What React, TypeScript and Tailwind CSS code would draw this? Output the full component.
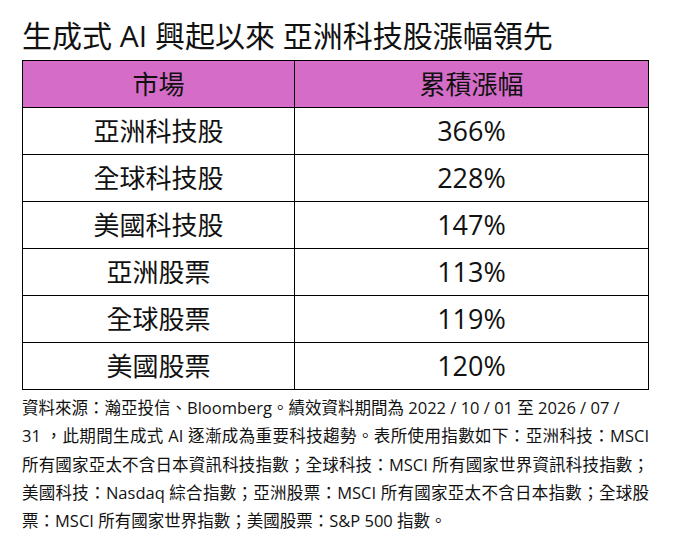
import React from 'react';

const FONT = '"Open Sans", "Noto Sans CJK TC", sans-serif';

const rows = [
  { market: '亞洲科技股', gain: '366%' },
  { market: '全球科技股', gain: '228%' },
  { market: '美國科技股', gain: '147%' },
  { market: '亞洲股票', gain: '113%' },
  { market: '全球股票', gain: '119%' },
  { market: '美國股票', gain: '120%' },
];

// footnote lines are fixed so that the wrapping matches the source
const noteLines = [
  '資料來源：瀚亞投信、Bloomberg。績效資料期間為 2022 / 10 / 01 至 2026 / 07 /',
  '31 ，此期間生成式 AI 逐漸成為重要科技趨勢。表所使用指數如下：亞洲科技：MSCI',
  '所有國家亞太不含日本資訊科技指數；全球科技：MSCI 所有國家世界資訊科技指數；',
  '美國科技：Nasdaq 綜合指數；亞洲股票：MSCI 所有國家亞太不含日本指數；全球股',
  '票：MSCI 所有國家世界指數；美國股票：S&P 500 指數。',
];

export default function App() {
  return (
    <div className="w-[676px] h-[540px] bg-white text-[#111] overflow-hidden" style={{ fontFamily: FONT }}>
      <div className="pl-[22px] pr-[27px] pt-[17px]">
        <h1 className="text-[30px] leading-[38px] font-normal whitespace-nowrap">
          生成式 AI 興起以來 亞洲科技股漲幅領先
        </h1>

        <table className="mt-[5px] w-[627px] border-collapse border-[1.5px] border-black text-[26px] text-[#111]">
          <colgroup>
            <col className="w-[272px]" />
            <col />
          </colgroup>
          <thead>
            <tr className="bg-[#d56dc8] h-[47px]">
              <th className="border-[1.5px] border-black font-normal text-center p-0">市場</th>
              <th className="border-[1.5px] border-black font-normal text-center p-0">累積漲幅</th>
            </tr>
          </thead>
          <tbody>
            {rows.map((r) => (
              <tr key={r.market} className="h-[47px]">
                <td className="border-[1.5px] border-black text-center p-0">{r.market}</td>
                <td className="border-[1.5px] border-black text-center p-0 text-[27px]">{r.gain}</td>
              </tr>
            ))}
          </tbody>
        </table>

        <div className="mt-[4px] w-[627px] text-[16.5px] leading-[28.3px] text-[#111]">
          {noteLines.map((line, i) => (
            <div
              key={i}
              className={
                i >= 1 && i <= 3
                  ? 'whitespace-nowrap text-justify [text-align-last:justify]'
                  : 'whitespace-nowrap'
              }
            >
              {line}
            </div>
          ))}
        </div>
      </div>
    </div>
  );
}
